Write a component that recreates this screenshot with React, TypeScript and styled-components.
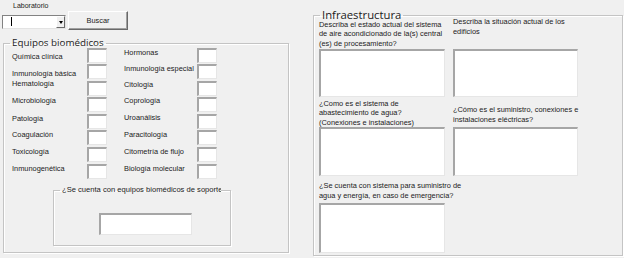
import styled, { createGlobalStyle } from 'styled-components';

const GlobalStyle = createGlobalStyle`
	html, body {
		margin: 0;
		padding: 0;
		background: #f0f0f0;
	}
	body {
		font-family: 'Liberation Sans', Arial, sans-serif;
		color: #1b1b1b;
	}
`;

const Styles = {
	Window: styled.div`
		width: 624px;
		height: 258px;
		overflow: hidden;
		box-sizing: border-box;
		display: flex;
		align-items: flex-start;
		padding-left: 2px;
		background: #f0f0f0;
	`,
	LeftColumn: styled.div`
		display: flex;
		flex-direction: column;
		width: 287px;
		flex-shrink: 0;
	`,
	SmallLabel: styled.div`
		height: 11px;
		line-height: 11px;
		padding-left: 11px;
		font-size: 7px;
	`,
	SearchRow: styled.div`
		display: flex;
		align-items: flex-start;
		gap: 2px;
	`,
	Combo: styled.div`
		margin-top: 4px;
		width: 64px;
		height: 14px;
		box-sizing: border-box;
		display: flex;
		align-items: stretch;
		background: #fff;
		border-style: solid;
		border-width: 1px;
		border-color: #828282 #e3e3e3 #e3e3e3 #828282;
	`,
	Caret: styled.span`
		width: 1px;
		height: 9px;
		margin: 1px 0 0 8px;
		background: #000;
	`,
	DropButton: styled.span`
		margin-left: auto;
		width: 9px;
		box-sizing: border-box;
		display: flex;
		align-items: center;
		justify-content: center;
		background: #f0f0f0;
		border-style: solid;
		border-width: 1px;
		border-color: #fff #696969 #696969 #fff;
		&::after {
			content: '';
			border-top: 3px solid #000;
			border-left: 2.5px solid transparent;
			border-right: 2.5px solid transparent;
		}
	`,
	Button: styled.button`
		width: 60px;
		height: 19px;
		margin: 0;
		padding: 0;
		box-sizing: border-box;
		font-family: 'Liberation Sans', Arial, sans-serif;
		font-size: 7.4px;
		color: #1b1b1b;
		background: #f0f0f0;
		border-style: solid;
		border-width: 1px;
		border-color: #fff #696969 #696969 #fff;
		box-shadow: inset -1px -1px 0 #a0a0a0;
	`,
	Group: styled.fieldset<{ $width: number }>`
		width: ${(p) => p.$width}px;
		box-sizing: border-box;
		margin: 0;
		min-width: 0;
		border: 1px solid #c4c4c4;
		box-shadow: inset 1px 1px 0 #fff, 1px 1px 0 #fff;
	`,
	Legend: styled.legend<{ $lh: number; $size: number }>`
		padding: 0 2px;
		font-family: 'Open Sans', 'Noto Sans', sans-serif;
		font-size: ${(p) => p.$size}px;
		line-height: ${(p) => p.$lh}px;
		color: #1b1b1b;
		white-space: nowrap;
	`,
	SubLegend: styled.legend`
		display: block;
		padding: 0 2px;
		margin-left: 6px;
		width: 161px;
		box-sizing: border-box;
		overflow: hidden;
		white-space: nowrap;
		font-size: 7.6px;
		line-height: 10px;
		height: 10px;
	`,
	Checks: styled.div`
		display: flex;
		gap: 17px;
	`,
	CheckColumn: styled.div`
		display: flex;
		flex-direction: column;
	`,
	CheckRow: styled.div<{ $labelWidth: number }>`
		display: grid;
		grid-template-columns: ${(p) => p.$labelWidth}px 20px;
		align-items: start;
		height: 16.6px;
	`,
	CheckLabel: styled.span<{ $dy: number }>`
		margin-top: ${(p) => p.$dy}px;
		font-size: 7.4px;
		line-height: 9px;
		white-space: nowrap;
	`,
	Field: styled.div<{ $w?: number; $h: number; $left?: number }>`
		width: ${(p) => (p.$w ? `${p.$w}px` : '100%')};
		height: ${(p) => p.$h}px;
		margin-left: ${(p) => p.$left ?? 0}px;
		box-sizing: border-box;
		background: #fff;
		border-style: solid;
		border-width: 2px 1px 1px 2px;
		border-color: #a6a6a6 #e6e6e6 #e6e6e6 #a6a6a6;
	`,
	InfraGrid: styled.div`
		display: grid;
		grid-template-columns: 126px 125px;
		grid-template-rows: 80px 79px 77px;
		column-gap: 8px;
	`,
	Question: styled.div`
		display: flex;
		flex-direction: column;
		justify-content: flex-end;
	`,
	QuestionText: styled.div<{ $gap: number }>`
		margin-bottom: ${(p) => p.$gap}px;
		font-size: 7.4px;
		line-height: 9.5px;
		white-space: nowrap;
	`,
};

const LEFT_CHECKS = [
	{ label: 'Química clínica', dy: 4 },
	{ label: 'Inmunología básica', dy: 4.5 },
	{ label: 'Hematología', dy: -2 },
	{ label: 'Microbiología', dy: -1 },
	{ label: 'Patología', dy: 0 },
	{ label: 'Coagulación', dy: 0 },
	{ label: 'Toxicología', dy: 0 },
	{ label: 'Inmunogenética', dy: 0.5 },
];

const RIGHT_CHECKS = [
	{ label: 'Hormonas', dy: 0 },
	{ label: 'Inmunología especial', dy: -0.5 },
	{ label: 'Citología', dy: -1 },
	{ label: 'Coprología', dy: -0.8 },
	{ label: 'Uroanálisis', dy: -0.4 },
	{ label: 'Paracitología', dy: 0 },
	{ label: 'Citometría de flujo', dy: 0.4 },
	{ label: 'Biología molecular', dy: 0.8 },
];

const QUESTIONS = [
	{
		lines: ['Describa el estado actual del sistema', 'de aire acondicionado de la(s) central', '(es) de procesamiento?'],
		gap: 0.75,
		h: 48,
	},
	{ lines: ['Describa la situación actual de los', 'edificios'], gap: 13, h: 48 },
	{
		lines: ['¿Como es el sistema de', 'abastecimiento de agua?', '(Conexiones e instalaciones)'],
		gap: 0,
		h: 49,
	},
	{ lines: ['¿Cómo es el suministro, conexiones e', 'instalaciones eléctricas?'], gap: 2.75, h: 49 },
	{ lines: ['¿Se cuenta con sistema para suministro de', 'agua y energía, en caso de emergencia?'], gap: 3, h: 50 },
];

type Check = { label: string; dy: number };

const CheckList = ({ items, labelWidth }: { items: Check[]; labelWidth: number }) => (
	<Styles.CheckColumn>
		{items.map((item) => (
			<Styles.CheckRow key={item.label} $labelWidth={labelWidth}>
				<Styles.CheckLabel $dy={item.dy}>{item.label}</Styles.CheckLabel>
				<Styles.Field $w={20} $h={15} />
			</Styles.CheckRow>
		))}
	</Styles.CheckColumn>
);

export default function App() {
	return (
		<>
			<GlobalStyle />
			<Styles.Window>
				<Styles.LeftColumn>
					<Styles.SmallLabel>Laboratorio</Styles.SmallLabel>
					<Styles.SearchRow>
						<Styles.Combo>
							<Styles.Caret />
							<Styles.DropButton />
						</Styles.Combo>
						<Styles.Button type="button">Buscar</Styles.Button>
					</Styles.SearchRow>
					<Styles.Group $width={286} style={{ margin: '9px 0 0 1px', padding: '0.5px 0 6px 8px' }}>
						<Styles.Legend $lh={8} $size={9.8} style={{ marginLeft: -2 }}>
							Equipos biomédicos
						</Styles.Legend>
						<Styles.Checks>
							<CheckList items={LEFT_CHECKS} labelWidth={75} />
							<CheckList items={RIGHT_CHECKS} labelWidth={73} />
						</Styles.Checks>
						<Styles.Group $width={178} style={{ margin: '5px 0 0 41px', padding: '18px 0 10px 0' }}>
							<Styles.SubLegend>¿Se cuenta con equipos biomédicos de soporte?</Styles.SubLegend>
							<Styles.Field $w={93} $h={22} $left={45} />
						</Styles.Group>
					</Styles.Group>
				</Styles.LeftColumn>
				<Styles.Group $width={310} style={{ margin: '13px 0 0 24px', padding: '0 0 2px 5px' }}>
					<Styles.Legend $lh={4} $size={11.3} style={{ marginLeft: 1 }}>
						Infraestructura
					</Styles.Legend>
					<Styles.InfraGrid>
						{QUESTIONS.map((q) => (
							<Styles.Question key={q.lines[0]}>
								<Styles.QuestionText $gap={q.gap}>
									{q.lines.map((line, i) => (
										<div key={i}>{line}</div>
									))}
								</Styles.QuestionText>
								<Styles.Field $h={q.h} />
							</Styles.Question>
						))}
					</Styles.InfraGrid>
				</Styles.Group>
			</Styles.Window>
		</>
	);
}
